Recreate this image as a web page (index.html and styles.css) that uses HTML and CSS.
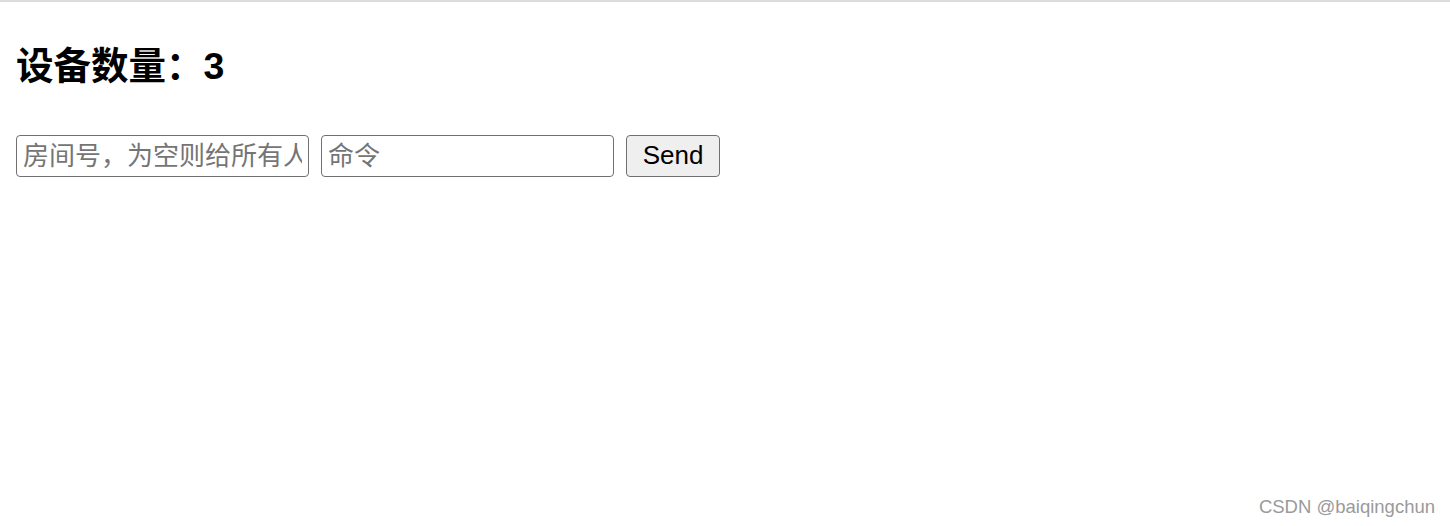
FILE: index.html
```html
<!DOCTYPE html>
<html>
	<head>
		<meta charset="utf-8">
		<title>设备控制</title>
		<link rel="stylesheet" href="styles.css">
	</head>
	<body>
		<div class="pageBody">
			<h3 class="count">设备数量：<span class="num">3</span></h3>
			<div class="sendRow">
				<input type="text" id="room" placeholder="房间号，为空则给所有人">
				<input type="text" id="cmd" placeholder="命令">
				<input type="button" value="Send" id="btn">
			</div>
		</div>
		<div class="mark">CSDN @baiqingchun</div>
	</body>
</html>
```
FILE: styles.css
```css
html,body{
	margin: 0;
	height: 100%;
	background-color: #fff;
}
body{
	font-family: "Liberation Sans", "Noto Sans CJK SC", sans-serif;
	border-top: 2px solid #dcdcdc;
	box-sizing: border-box;
	position: relative;
}
.pageBody{padding: 0 16px;}
.count{
	margin: 0;
	padding-top: 42px;
	font-size: 37.5px;
	line-height: 44px;
	font-weight: bold;
	color: #000;
}
.sendRow{
	display: flex;
	gap: 12px;
	margin-top: 47px;
}
.sendRow input{
	box-sizing: border-box;
	height: 42px;
	margin: 0;
	font-family: "Liberation Sans", "Noto Sans CJK SC", sans-serif;
	font-size: 26px;
	border: 1.5px solid #707070;
	border-radius: 4px;
	color: #000;
}
.sendRow input::placeholder{color: #757575;}
#room,#cmd{
	width: 293px;
	padding: 0 6px;
}
#btn{
	width: 94px;
	padding: 0 0 2px;
	background-color: #efefef;
}
.mark{
	position: absolute;
	right: 15px;
	bottom: 8px;
	font-size: 18.5px;
	color: #9a9a9a;
	font-family: "Liberation Sans", sans-serif;
}
```
